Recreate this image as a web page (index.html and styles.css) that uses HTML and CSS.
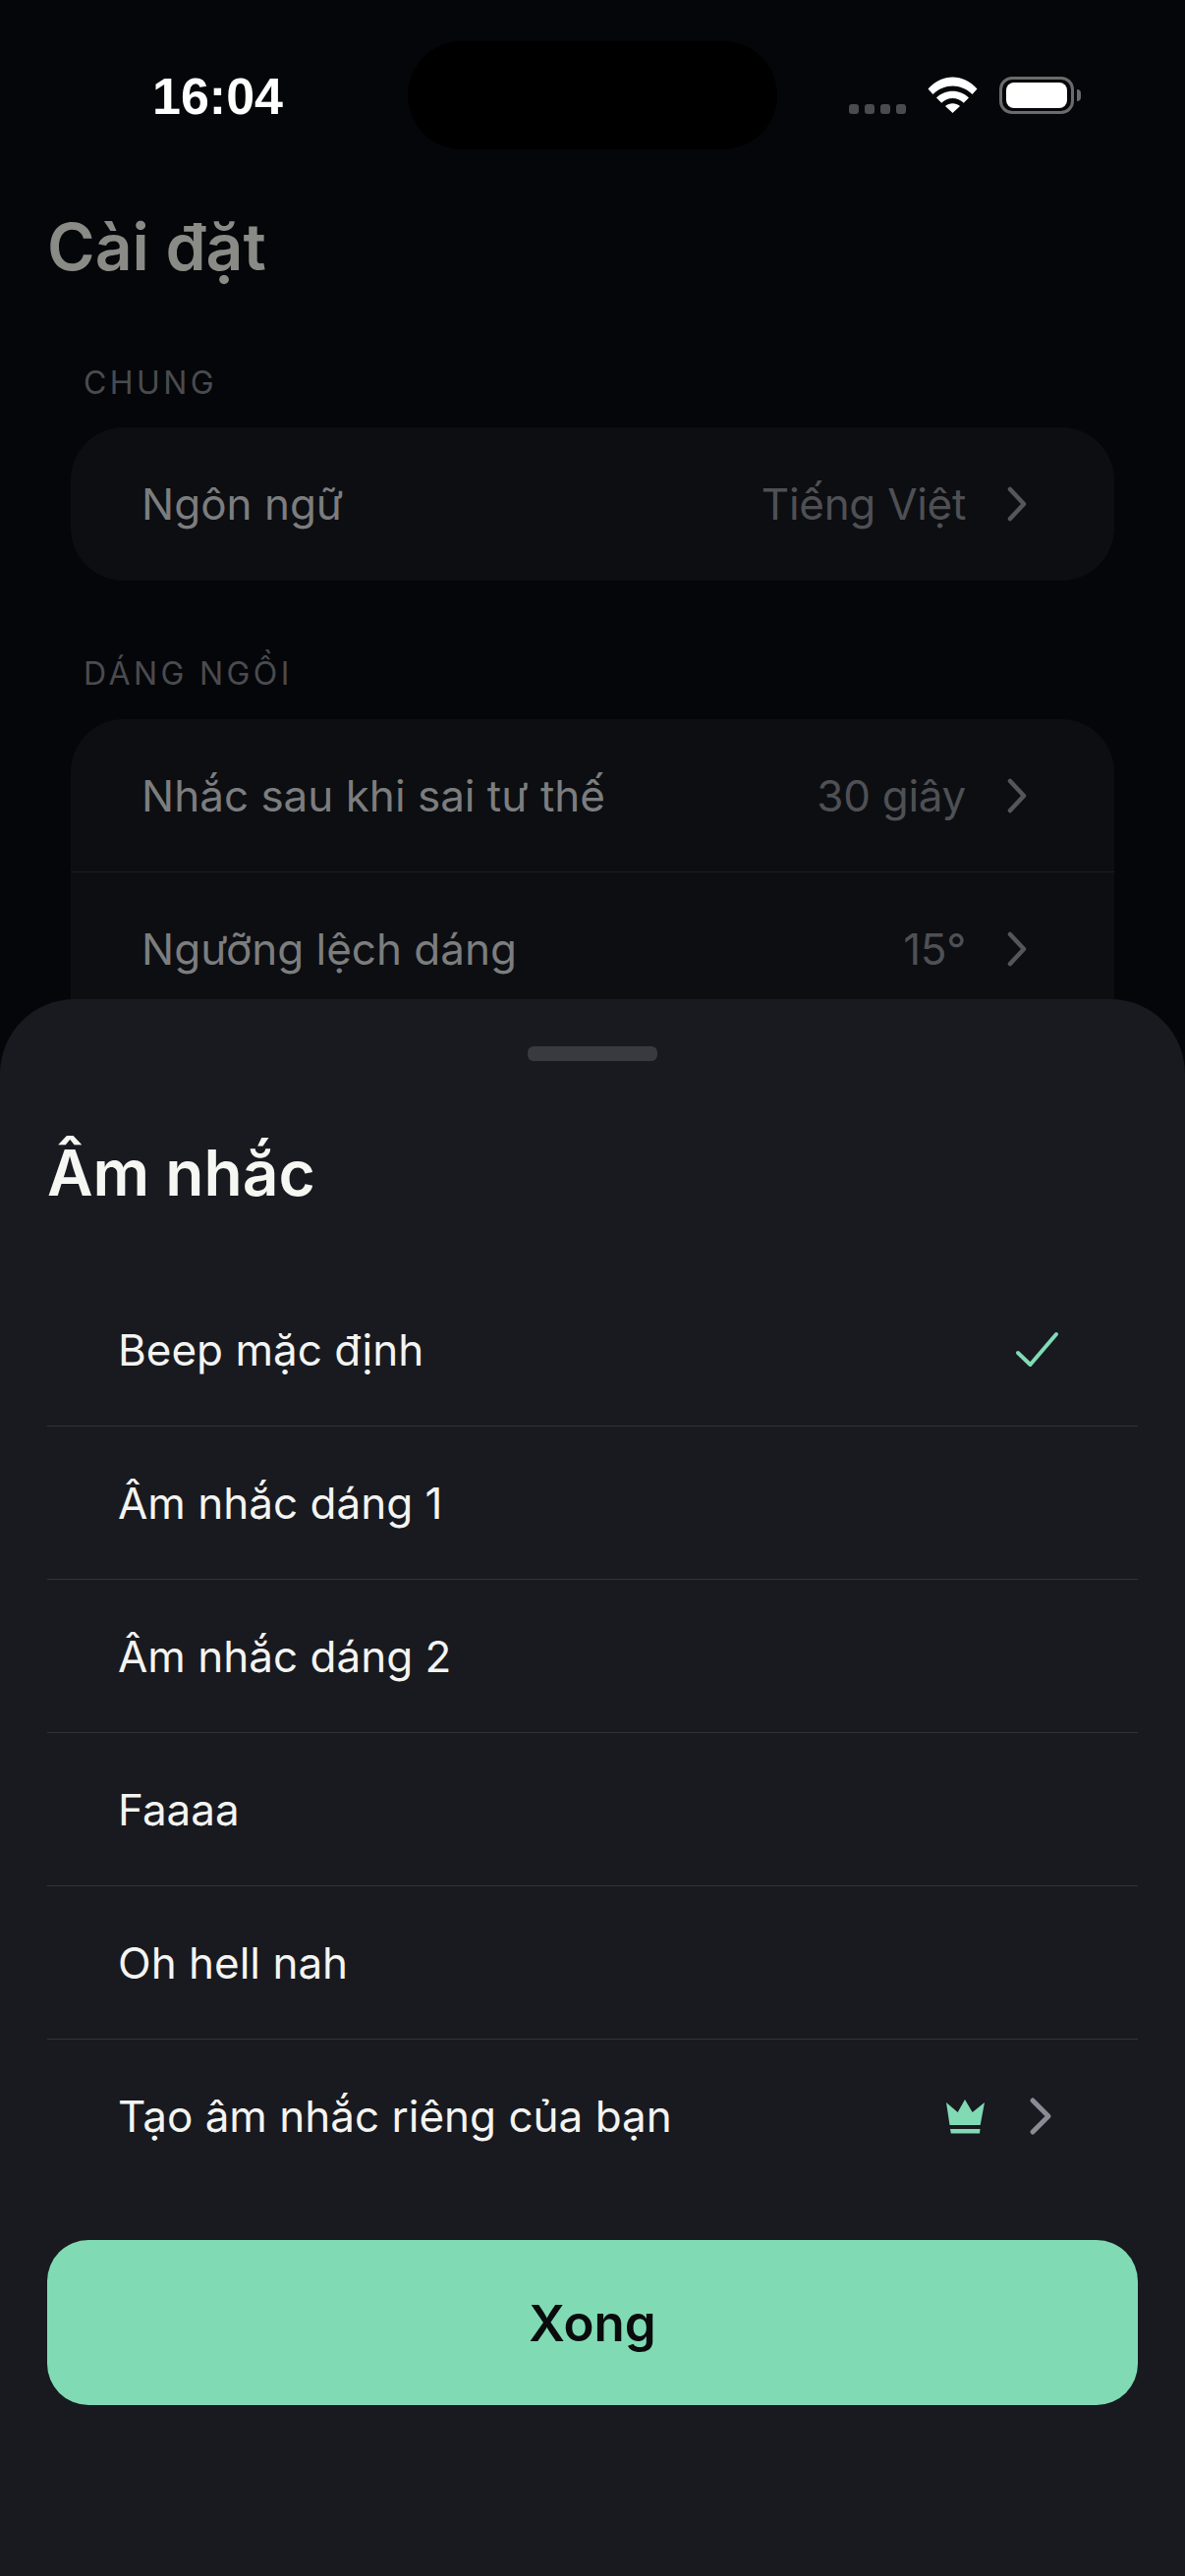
FILE: index.html
```html
<!DOCTYPE html>
<html lang="vi">
<head>
  <meta charset="UTF-8">
  <meta name="viewport" content="width=device-width, initial-scale=1.0">
  <title>Cài đặt</title>
  <link rel="stylesheet" href="styles.css">
</head>
<body>

<div class="screen">
  <div class="island"></div>

  <!-- Status bar -->
  <div class="status-bar">
    <span class="time">16:04</span>
    <div class="status-icons">
      <div class="signal"><i></i><i></i><i></i><i></i></div>
      <svg class="wifi" viewBox="0 0 51 37" width="51" height="37">
        <path d="M0.5 12.5C14.5 -3.5 36.5 -3.5 50.5 12.5L45.5 18C34 6.5 17 6.5 5.5 18Z" fill="#fff"/>
        <path d="M9 21.5C18 12.5 33 12.5 42 21.5L36.8 26.8C30.5 20.5 20.5 20.5 14.2 26.8Z" fill="#fff"/>
        <path d="M18 30C22.5 26.3 28.5 26.3 33 30L25.5 37Z" fill="#fff"/>
      </svg>
      <div class="battery"><div class="battery-fill"></div></div>
      <div class="battery-nub"></div>
    </div>
  </div>

  <!-- Settings behind the sheet -->
  <h1 class="page-title">Cài đặt</h1>

  <div class="section-label">CHUNG</div>
  <div class="card">
    <div class="card-row">
      <span>Ngôn ngữ</span>
      <span class="value">Tiếng Việt</span>
      <svg class="chevron" viewBox="0 0 20 36" width="20" height="36"><path d="M3 3L17 18L3 33" fill="none" stroke="#55565a" stroke-width="4.5" stroke-linecap="round" stroke-linejoin="round"/></svg>
    </div>
  </div>

  <div class="section-label second">DÁNG NGỒI</div>
  <div class="card">
    <div class="card-row">
      <span>Nhắc sau khi sai tư thế</span>
      <span class="value">30 giây</span>
      <svg class="chevron" viewBox="0 0 20 36" width="20" height="36"><path d="M3 3L17 18L3 33" fill="none" stroke="#55565a" stroke-width="4.5" stroke-linecap="round" stroke-linejoin="round"/></svg>
    </div>
    <div class="card-row">
      <span>Ngưỡng lệch dáng</span>
      <span class="value">15°</span>
      <svg class="chevron" viewBox="0 0 20 36" width="20" height="36"><path d="M3 3L17 18L3 33" fill="none" stroke="#55565a" stroke-width="4.5" stroke-linecap="round" stroke-linejoin="round"/></svg>
    </div>
    <div class="card-row"></div>
  </div>

  <!-- Music picker sheet -->
  <div class="sheet">
    <div class="handle"></div>
    <h2 class="sheet-title">Âm nhắc</h2>

    <div class="option">
      <span>Beep mặc định</span>
      <svg class="check" viewBox="0 0 46 38" width="46" height="38"><path d="M3 22L15.5 34L42 3" fill="none" stroke="#80dbb5" stroke-width="4" stroke-linecap="round" stroke-linejoin="round"/></svg>
    </div>
    <div class="option"><span>Âm nhắc dáng 1</span></div>
    <div class="option"><span>Âm nhắc dáng 2</span></div>
    <div class="option"><span>Faaaa</span></div>
    <div class="option"><span>Oh hell nah</span></div>
    <div class="option">
      <span>Tạo âm nhắc riêng của bạn</span>
      <svg class="crown" viewBox="0 0 39 35" width="39" height="35">
        <path d="M0 3L11.7 13L19 0L26.7 13L39 3L34.7 26H3.5Z" fill="#80dbb5"/>
        <path d="M4 30H34.5L34 34.5H4.8Z" fill="#80dbb5"/>
      </svg>
      <svg class="chevron-light" viewBox="0 0 24 40" width="24" height="40"><path d="M4 4L20 20L4 36" fill="none" stroke="#8a8b94" stroke-width="5" stroke-linecap="round" stroke-linejoin="round"/></svg>
    </div>

    <button class="done-btn">Xong</button>
  </div>
</div>

</body>
</html>
```

FILE: styles.css
```css
* {
  margin: 0;
  padding: 0;
  box-sizing: border-box;
}

body {
  font-family: Inter, "Noto Sans", sans-serif;
  background-color: #050609;
}

.screen {
  position: relative;
  width: 1206px;
  height: 2622px;
  overflow: hidden;
  background-color: #050609;
}

.island {
  position: absolute;
  top: 42px;
  left: 415px;
  width: 376px;
  height: 110px;
  background-color: #000;
  border-radius: 55px;
}

/* Status bar */
.status-bar {
  height: 192px;
  padding: 72px 106px 0 155px;
  display: flex;
  justify-content: space-between;
  align-items: flex-start;
}

.time {
  font-family: "Liberation Sans", Arial, sans-serif;
  font-size: 52px;
  line-height: 52px;
  font-weight: 700;
  color: #fff;
}

.status-icons {
  display: flex;
  align-items: flex-start;
  padding-top: 6px;
}

.signal {
  display: flex;
  gap: 6px;
  margin-top: 28px;
  margin-right: 22px;
}

.signal i {
  display: block;
  width: 10px;
  height: 10px;
  border-radius: 3px;
  background-color: #4b4b4d;
}

.battery {
  width: 76px;
  height: 38px;
  margin-left: 22px;
  padding: 3px 4px;
  border: 3px solid #6b6b6b;
  border-radius: 13px;
}

.battery-fill {
  width: 100%;
  height: 100%;
  background-color: #fff;
  border-radius: 8px;
}

.battery-nub {
  width: 4px;
  height: 12px;
  margin-top: 13px;
  margin-left: 3px;
  background-color: #6b6b6b;
  border-radius: 0 6px 6px 0;
}

/* Settings */
.page-title {
  margin-top: 21px;
  margin-left: 48px;
  font-size: 66px;
  line-height: 76px;
  font-weight: 600;
  color: #8a8a86;
}

.section-label {
  margin: 81px 0 0 85px;
  height: 65px;
  font-size: 32px;
  line-height: 40px;
  letter-spacing: 3.4px;
  color: #4a4b4f;
}

.section-label.second {
  margin-top: 75px;
  height: 66px;
}

.card {
  margin: 0 72px;
  background-color: #0c0e12;
  border-radius: 54px;
}

.card-row {
  display: flex;
  align-items: center;
  height: 156px;
  padding: 0 89px 0 72px;
  border-bottom: 1px solid #1c1e22;
  font-size: 44px;
  color: #7c7d7e;
}

.card-row:last-child {
  border-bottom: none;
}

.value {
  margin-left: auto;
  margin-right: 42px;
  letter-spacing: -0.3px;
  color: #4f5054;
}

/* Sheet */
.sheet {
  position: absolute;
  top: 1017px;
  left: 0;
  right: 0;
  bottom: 0;
  padding: 48px 48px 0;
  background-color: #181a1f;
  border-radius: 76px 76px 0 0;
}

.handle {
  width: 132px;
  height: 15px;
  margin: 0 auto;
  background-color: #393a3f;
  border-radius: 6px;
}

.sheet-title {
  margin-top: 72px;
  height: 144px;
  font-size: 64px;
  line-height: 84px;
  font-weight: 600;
  color: #f6f6f2;
}

.option {
  display: flex;
  align-items: center;
  height: 156px;
  padding: 0 76px 0 72px;
  border-bottom: 1px solid #32343a;
  font-size: 44px;
  color: #f4f4f2;
}

.option:last-of-type {
  border-bottom: none;
}

.check {
  margin-left: auto;
  margin-right: 3px;
}

.crown {
  margin-left: auto;
  margin-right: 45px;
}

.chevron-light {
  margin-right: 11px;
}

.done-btn {
  display: block;
  width: 100%;
  height: 168px;
  margin-top: 48px;
  border: none;
  border-radius: 42px;
  background-color: #80dbb5;
  font-family: Inter, "Noto Sans", sans-serif;
  font-size: 51px;
  font-weight: 600;
  color: #0a0b0c;
}
```
